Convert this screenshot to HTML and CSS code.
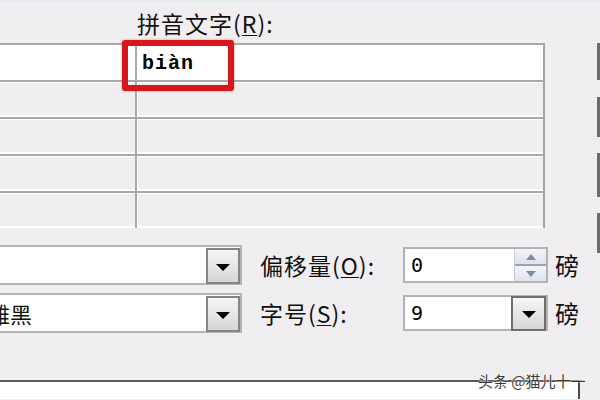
FILE: index.html
```html
<!DOCTYPE html>
<html lang="zh-CN">
<head>
    <meta charset="UTF-8">
    <title>拼音指南</title>
    <link rel="stylesheet" href="styles.css">
</head>
<body>
    <div class="dialog">
        <div class="upper">
            <div class="main">
                <div class="head">
                    <span class="label">拼音文字(<u>R</u>):</span>
                </div>
                <div class="grid">
                    <div class="row active">
                        <div class="cell base"></div>
                        <div class="cell ruby"><span class="pinyin">biàn</span></div>
                    </div>
                    <div class="row">
                        <div class="cell base"></div>
                        <div class="cell ruby"></div>
                    </div>
                    <div class="row">
                        <div class="cell base"></div>
                        <div class="cell ruby"></div>
                    </div>
                    <div class="row">
                        <div class="cell base"></div>
                        <div class="cell ruby"></div>
                    </div>
                    <div class="row">
                        <div class="cell base"></div>
                        <div class="cell ruby"></div>
                    </div>
                </div>
            </div>
            <div class="side">
                <div class="edge e1"></div>
                <div class="edge e2"></div>
                <div class="edge e3"></div>
                <div class="edge e4"></div>
            </div>
        </div>

        <div class="options">
            <div class="opt-row">
                <div class="combo">
                    <span class="combo-text"></span>
                    <span class="drop"><i class="tri"></i></span>
                </div>
                <span class="label opt-label">偏移量(<u>O</u>):</span>
                <div class="field">
                    <span class="value">0</span>
                    <span class="spin-btns">
                        <span class="spin up"><i></i></span>
                        <span class="spin down"><i></i></span>
                    </span>
                </div>
                <span class="unit">磅</span>
            </div>
            <div class="opt-row">
                <div class="combo">
                    <span class="combo-text font-name">微软雅黑</span>
                    <span class="drop"><i class="tri"></i></span>
                </div>
                <span class="label opt-label">字号(<u>S</u>):</span>
                <div class="field">
                    <span class="value">9</span>
                    <span class="drop dark"><i class="tri"></i></span>
                </div>
                <span class="unit">磅</span>
            </div>
        </div>

        <div class="footer">
            <div class="panel"></div>
        </div>
    </div>

    <!-- annotation + watermark sit on top of the dialog -->
    <div class="highlight"></div>
    <div class="mark">头条 @猫儿十一</div>
</body>
</html>
```

FILE: styles.css
```css
* {
    margin: 0;
    padding: 0;
    box-sizing: border-box;
}

body {
    width: 600px;
    height: 400px;
    overflow: hidden;
    background: #f0eef0;
    color: #111;
    font-family: "Noto Sans CJK SC", "Liberation Sans", sans-serif;
    position: relative;
}

.dialog {
    border-top: 2px solid #e3ecee;
}

.upper {
    display: flex;
    height: 226px;
}

.main {
    width: 545px;
}

.head {
    height: 41px;
    padding: 8px 0 0 137px;
}

.label {
    font-size: 23px;
    line-height: 26px;
    letter-spacing: 1px;
    white-space: nowrap;
}

.label u {
    text-decoration-thickness: 1px;
    text-underline-offset: 2px;
}

.row {
    display: flex;
    height: 37px;
}

.cell {
    background: #f0eef0;
    border-top: 2px solid #a9a9a9;
    box-shadow: inset 0 1px 0 #fff, inset 0 -2px 0 #fff;
}

.row.active .cell {
    background: #fff;
}

.cell.base {
    width: 135px;
}

.cell.ruby {
    flex: 1;
    border-left: 2px solid #a9a9a9;
    border-right: 2px solid #a3a3a3;
    box-shadow: inset 0 1px 0 #fff, inset 0 -2px 0 #fff, inset 1px 0 0 #fff;
    display: flex;
    align-items: center;
    padding-left: 5px;
}

.pinyin {
    font-family: "Liberation Mono", monospace;
    font-size: 20px;
    line-height: 22px;
    letter-spacing: 1px;
    font-weight: bold;
    color: #000;
    margin-top: 2px;
}

.side {
    margin-left: 52px;
    width: 3px;
    padding-top: 41px;
    display: flex;
    flex-direction: column;
    flex-shrink: 0;
}

.edge {
    background: #6d6d6d;
    flex-shrink: 0;
}

.e1 { height: 37px; }
.e2 { height: 40px; margin-top: 17px; }
.e3 { height: 44px; margin-top: 16px; }
.e4 { height: 40px; margin-top: 16px; }

.options {
    padding-top: 17px;
    display: flex;
    flex-direction: column;
    gap: 8px;
}

.opt-row {
    display: flex;
    align-items: center;
    height: 40px;
}

.combo {
    width: 242px;
    height: 40px;
    background: #fff;
    border: 2px solid #b3b3b3;
    border-left: none;
    display: flex;
    align-items: center;
    justify-content: space-between;
}

.combo-text {
    font-size: 22px;
    line-height: 26px;
    white-space: nowrap;
}

.font-name {
    margin-left: -56px;
}

.drop {
    width: 34px;
    height: 36px;
    margin-top: 1px;
    border: 2px solid #858585;
    background: linear-gradient(#f6f6f6, #d6d6d6);
    display: flex;
    align-items: center;
    justify-content: center;
}

.drop.dark {
    width: 35px;
    height: 35px;
    margin-top: 0;
    border-color: #6f6f6f;
}

.tri {
    width: 0;
    height: 0;
    border-left: 7px solid transparent;
    border-right: 7px solid transparent;
    border-top: 7px solid #000;
    margin-top: 3px;
}

.opt-label {
    width: 143px;
    margin-left: 18px;
}

.field {
    width: 145px;
    height: 36px;
    background: #fff;
    border: 2px solid #b3b3b3;
    display: flex;
    align-items: center;
    justify-content: space-between;
}

.value {
    font-family: "DejaVu Sans Mono", monospace;
    font-size: 20px;
    padding-left: 6px;
    color: #000;
}

.spin-btns {
    width: 32px;
    height: 32px;
    display: flex;
    flex-direction: column;
    border-left: 1px solid #c8ccd4;
}

.spin {
    flex: 1;
    display: flex;
    align-items: center;
    justify-content: center;
    background: linear-gradient(#f2f4f8, #dfe3ea);
}

.spin.up {
    border-bottom: 2px solid #9aa3b3;
}

.spin i {
    width: 0;
    height: 0;
    border-left: 5px solid transparent;
    border-right: 5px solid transparent;
}

.spin.up i {
    border-bottom: 6px solid #7f8ba3;
}

.spin.down i {
    border-top: 6px solid #7f8ba3;
}

.unit {
    font-size: 24px;
    line-height: 28px;
    margin-left: 7px;
}

.footer {
    margin-top: 47px;
}

.panel {
    width: 580px;
    height: 19px;
    background: #fff;
    border-top: 2px solid #5a5a5a;
    border-right: 2px solid #4a4a4a;
}

.highlight {
    position: absolute;
    left: 122px;
    top: 40px;
    width: 112px;
    height: 51px;
    border: 6px solid #d7161d;
    border-radius: 3px;
    box-shadow: 0 0 2px rgba(215, 22, 29, 0.6);
}

.mark {
    position: absolute;
    left: 478px;
    top: 372px;
    font-size: 15px;
    line-height: 18px;
    color: #3a3a3a;
    white-space: nowrap;
    text-shadow: 0 0 2px #fff, 0 0 1px #fff;
}
```
